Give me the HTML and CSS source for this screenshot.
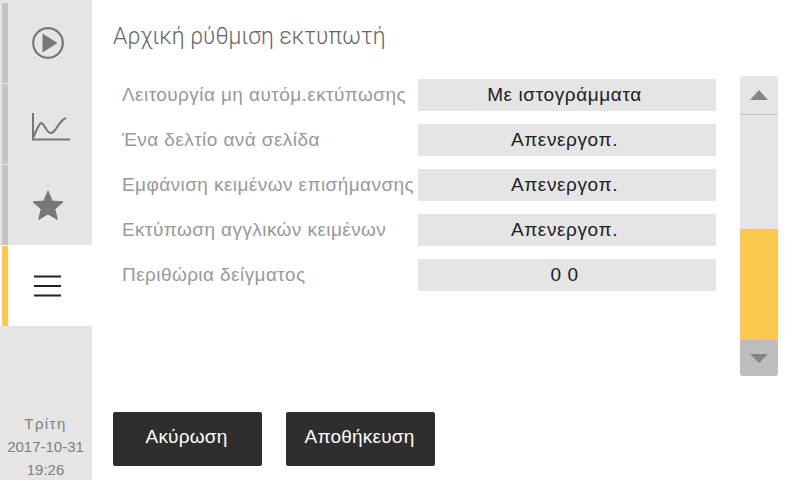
FILE: index.html
```html
<!DOCTYPE html>
<html lang="el">
<head>
    <meta charset="UTF-8">
    <title>Αρχική ρύθμιση εκτυπωτή</title>
    <link rel="stylesheet" href="styles.css">
</head>
<body>
    <div class="sidebar">
        <div class="tab">
            <svg class="icon" width="36" height="36" viewBox="0 0 36 36">
                <circle cx="18" cy="18" r="14.8" fill="none" stroke="#777" stroke-width="2.2"/>
                <path d="M12.5 8.5 L27.5 18 L12.5 27.5 Z" fill="#777"/>
            </svg>
        </div>
        <div class="tab">
            <svg class="icon chart-icon" width="40" height="30" viewBox="0 0 40 30">
                <path d="M2 1 V27.5 H39" fill="none" stroke="#777" stroke-width="2"/>
                <path d="M2.5 25 C5 19 8 12 10 11 C13 10 15 21 20 21 C25 21 27 9 35 6" fill="none" stroke="#777" stroke-width="2"/>
            </svg>
        </div>
        <div class="tab">
            <svg class="icon" width="32" height="30" viewBox="0 0 32 30">
                <path d="M16 1 L20.2 11 L31 11.9 L22.8 19 L25.3 29.5 L16 23.9 L6.7 29.5 L9.2 19 L1 11.9 L11.8 11 Z" fill="#777" stroke="#777" stroke-linejoin="round"/>
            </svg>
        </div>
        <div class="tab active">
            <svg class="icon" width="28" height="24" viewBox="0 0 28 24">
                <path d="M0 2.5 H27 M0 12 H27 M0 21.5 H27" fill="none" stroke="#222" stroke-width="2"/>
            </svg>
        </div>
        <div class="clock">
            <div class="day">Τρίτη</div>
            <div>2017-10-31</div>
            <div>19:26</div>
        </div>
    </div>

    <div class="main">
        <h1 class="title">Αρχική ρύθμιση εκτυπωτή</h1>
        <div class="content">
            <div class="settings">
                <div class="row">
                    <span class="label">Λειτουργία μη αυτόμ.εκτύπωσης</span>
                    <span class="value">Με ιστογράμματα</span>
                </div>
                <div class="row">
                    <span class="label">Ένα δελτίο ανά σελίδα</span>
                    <span class="value">Απενεργοπ.</span>
                </div>
                <div class="row">
                    <span class="label">Εμφάνιση κειμένων επισήμανσης</span>
                    <span class="value">Απενεργοπ.</span>
                </div>
                <div class="row">
                    <span class="label">Εκτύπωση αγγλικών κειμένων</span>
                    <span class="value">Απενεργοπ.</span>
                </div>
                <div class="row">
                    <span class="label">Περιθώρια δείγματος</span>
                    <span class="value">0 0</span>
                </div>
            </div>
            <div class="scrollbar">
                <div class="scroll-up"><span class="arrow-up"></span></div>
                <div class="scroll-track"></div>
                <div class="scroll-thumb"></div>
                <div class="scroll-down"><span class="arrow-down"></span></div>
            </div>
        </div>
        <div class="buttons">
            <button class="btn">Ακύρωση</button>
            <button class="btn">Αποθήκευση</button>
        </div>
    </div>
</body>
</html>
```

FILE: styles.css
```css
* {
    box-sizing: border-box;
}

body {
    margin: 0;
    width: 800px;
    height: 480px;
    display: flex;
    overflow: hidden;
    background-color: white;
    font-family: "Liberation Sans", sans-serif;
}

.sidebar {
    width: 92px;
    height: 480px;
    padding-top: 3px;
    display: flex;
    flex-direction: column;
    gap: 1px;
    background-color: #e5e5e5;
}

.tab {
    height: 80px;
    margin-left: 2px;
    display: flex;
    align-items: center;
    justify-content: center;
    padding-right: 4px;
    border-left: 6px solid #c4c4c4;
}

.tab.active {
    border-left-color: #fcc94f;
    background-color: white;
    box-shadow: -2px 0 0 white, 0 -1px 0 white;
}

.chart-icon {
    margin-left: 6px;
    margin-top: 5px;
}

.clock {
    margin-top: auto;
    height: 68px;
    padding-right: 1px;
    color: #808080;
    font-size: 15px;
    line-height: 23px;
    text-align: center;
}

.day {
    letter-spacing: 1.4px;
}

.main {
    flex: 1;
    display: flex;
    flex-direction: column;
    padding-left: 21px;
}

.title {
    margin: 0;
    height: 76px;
    padding-top: 23px;
    color: #666;
    font-family: "Roboto", sans-serif;
    font-size: 23px;
    font-weight: 300;
    line-height: 28px;
}

.content {
    display: flex;
    height: 300px;
}

.settings {
    width: 603px;
    padding-top: 3px;
    padding-left: 9px;
    display: flex;
    flex-direction: column;
    gap: 13px;
}

.row {
    display: flex;
    align-items: center;
    justify-content: space-between;
    height: 32px;
}

.label {
    color: #999;
    font-size: 19px;
    letter-spacing: 0.42px;
}

.value {
    width: 298px;
    height: 32px;
    padding-right: 5px;
    line-height: 31px;
    text-align: center;
    background-color: #e5e5e5;
    color: #222;
    font-size: 19px;
    letter-spacing: 0.6px;
}

.scrollbar {
    width: 38px;
    margin-left: 24px;
    display: flex;
    flex-direction: column;
    border-radius: 3px;
    overflow: hidden;
    background-color: #e5e5e5;
}

.scroll-up {
    height: 39px;
    display: flex;
    align-items: center;
    justify-content: center;
    border-bottom: 1px solid #c4c4c4;
}

.scroll-track {
    flex: 1;
}

.scroll-thumb {
    height: 111px;
    background-color: #fcc94f;
}

.scroll-down {
    height: 36px;
    display: flex;
    align-items: center;
    justify-content: center;
    background-color: #bdbdbd;
}

.arrow-up {
    border-left: 9px solid transparent;
    border-right: 9px solid transparent;
    border-bottom: 10px solid #858585;
}

.arrow-down {
    border-left: 9px solid transparent;
    border-right: 9px solid transparent;
    border-top: 9px solid #858585;
}

.buttons {
    display: flex;
    gap: 24px;
    margin-top: 36px;
}

.btn {
    width: 149px;
    height: 54px;
    padding: 0 2px 4px 0;
    border: none;
    border-radius: 2px;
    background-color: #2e2e2e;
    color: white;
    font-family: inherit;
    font-size: 19px;
    letter-spacing: 0.2px;
}
```
